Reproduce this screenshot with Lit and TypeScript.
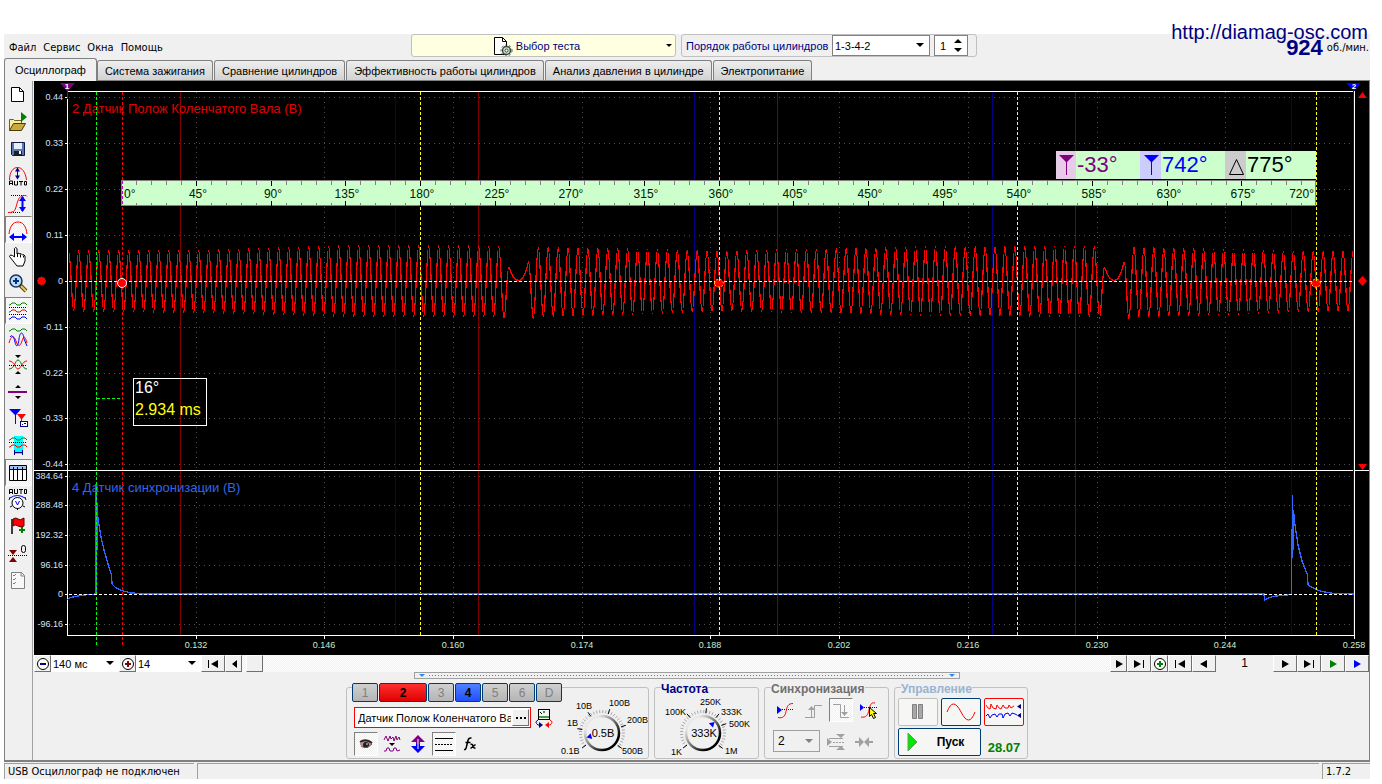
import { LitElement, html, svg, css } from "lit";
import { customElement, property, state } from "lit/decorators.js";
import { classMap } from "lit/directives/class-map.js";

/* ---------- signal data ---------- */

interface Run { from: number; to: number; teeth: number; hi: number[]; lo: number[]; }

const RUNS: Run[] = [
  { from: 68.7, to: 498.7, teeth: 43, hi: [251, 250, 245, 246], lo: [311, 313, 317, 317] },
  { from: 538.3, to: 1094.3, teeth: 56, hi: [247, 251, 247, 246], lo: [317, 311, 315, 317] },
  { from: 1134, to: 1353, teeth: 22, hi: [247, 249, 251, 251], lo: [317, 315, 312, 311] },
];

const pick = (v: number[], t: number) => {
  const p = Math.min(t * (v.length - 1), v.length - 1.001);
  const i = Math.floor(p);
  return v[i] + (v[i + 1] - v[i]) * (p - i);
};

function crankPath(): string {
  let d = "";
  let x = 0;
  let y = 0;
  const go = (nx: number, ny: number, out = 0.36, into = 0.36) => {
    const w = nx - x;
    d += ` C${(x + w * out).toFixed(1)} ${y.toFixed(1)} ${(nx - w * into).toFixed(1)} ${ny.toFixed(1)} ${nx.toFixed(1)} ${ny.toFixed(1)}`;
    x = nx;
    y = ny;
  };
  RUNS.forEach((r, n) => {
    const step = (r.to - r.from) / r.teeth;
    for (let i = 0; i <= r.teeth; i++) {
      const px = r.from + i * step;
      const py = pick(r.hi, i / r.teeth);
      if (n === 0 && i === 0) {
        d = `M${px} ${py}`;
        x = px;
        y = py;
      } else go(px, py);
      if (i < r.teeth) go(px + step / 2, pick(r.lo, i / r.teeth));
    }
    if (n < RUNS.length - 1) {
      go(r.to + 5.3, 318);
      go(r.to + 10, 267);
      go(r.to + 20, 280.5, 0.1, 0.7);
      go(r.to + 30, 262, 0.7, 0.1);
      go(r.to + 34.6, 319);
    }
  });
  return d;
}

const CRANK = crankPath();
const SYNC =
  "M67 600 L69 598 L75 596.5 L84 595 L96 594 L96 484 L97 506 L97 550 L97.5 515 L99 525 L101 537 L104 550 L108 564 L111.5 575 L112 584 L116 588 L123 591 L130 592.5 L142 594 L1264 594 L1264.5 600 L1269 597.5 L1276 596 L1291.5 594.5 L1292 545 L1292.5 495 L1293 550 L1293.5 510 L1295 525 L1298 545 L1302 561 L1307.5 575 L1308 585 L1314 588.5 L1322 591.5 L1334 593.5 L1354 594";

const Y_UPPER: [number, string][] = [
  [97, "0.44"], [143, "0.33"], [189, "0.22"], [235, "0.11"], [281, "0"],
  [327, "-0.11"], [373, "-0.22"], [418, "-0.33"], [464, "-0.44"],
];
const Y_LOWER: [number, string][] = [
  [476, "384.64"], [505, "288.48"], [535, "192.32"], [565, "96.16"], [594, "0"], [624, "-96.16"],
];
const X_AXIS: [number, string][] = [
  [196, "0.132"], [324, "0.146"], [453, "0.160"], [582, "0.174"], [710, "0.188"],
  [839, "0.202"], [968, "0.216"], [1097, "0.230"], [1225, "0.244"], [1354, "0.258"],
];

@customElement("osc-chart")
class OscChart extends LitElement {
  static styles = css`
    :host { display: block; background: #000; }
    svg { display: block; width: 100%; height: auto; font-family: "Liberation Sans", Arial, sans-serif; }
    .crisp { shape-rendering: crispEdges; fill: none; }
    .grid { stroke: #505050; stroke-dasharray: 1 4; }
    .axis { stroke: #fff; }
    .dash { stroke-dasharray: 3 2; }
    .scale { font-size: 9px; fill: #d4e4f8; }
    .time { font-size: 9px; fill: #c8ecd0; text-anchor: middle; }
    .end { text-anchor: end; }
    .mid { text-anchor: middle; }
    .title { font-size: 13px; }
    .deg { font-size: 12px; fill: #002000; }
    .big { font-size: 22px; }
    .tip { font-size: 16px; }
    .flag { font-size: 8px; font-weight: bold; fill: #fff; text-anchor: middle; }
  `;

  private vline(x: number, color: string, cls = "", y1 = 92, y2 = 635) {
    return svg`<line class="crisp ${cls}" x1=${x + 0.5} x2=${x + 0.5} y1=${y1} y2=${y2} stroke=${color}></line>`;
  }

  private ruler() {
    const ticks = [];
    for (let i = 1; i < 80; i++) {
      const x = Math.round(121.5 + i * 14.93) + 0.5;
      const major = i % 5 === 0;
      ticks.push(svg`<path class="crisp" stroke=${major ? "#000" : "#808080"} d="M${x} 181v${major ? 5 : 4}M${x} 206v${major ? -5 : -3}"></path>`);
    }
    const labels = [];
    for (let i = 1; i < 16; i++) {
      labels.push(svg`<text class="deg mid" x=${Math.round(121.5 + i * 74.65) + 2} y="198">${i * 45}°</text>`);
    }
    return svg`
      <rect x="121" y="180" width="1195" height="26" fill="#ccffcc"></rect>
      <path class="crisp" stroke="#808080" d="M121.5 206V180.5H1316M121 205.5H1315.5V180"></path>
      ${ticks}
      <text class="deg" x="124" y="198">0°</text>
      ${labels}
      <text class="deg end" x="1314" y="198">720°</text>
      <line class="crisp dash" x1="122.5" x2="122.5" y1="181" y2="206" stroke="#d000d0"></line>`;
  }

  private readout() {
    return svg`
      <rect x="1056" y="151" width="260" height="28" fill="#ccffcc"></rect>
      <rect x="1056" y="151" width="20" height="28" fill="#e6cce6"></rect>
      <rect x="1140" y="151" width="21" height="28" fill="#ccccff"></rect>
      <rect x="1225" y="151" width="21" height="28" fill="#cccccc"></rect>
      <path d="M1059 155h15l-7 7v13h-1v-13z" fill="#800080"></path>
      <path d="M1144 155h15l-7 7v13h-1v-13z" fill="#0000ff"></path>
      <path d="M1229.500 174.500h14l-7-15z" fill="none" stroke="#000"></path>
      <text class="big" x="1077" y="172" fill="#800080">-33°</text>
      <text class="big" x="1162" y="172" fill="#0000ff">742°</text>
      <text class="big" x="1247" y="172" fill="#000">775°</text>`;
  }

  render() {
    return html`<svg viewBox="34 81 1335 574" role="img" aria-label="Осциллограмма">
      ${[...Y_UPPER, ...Y_LOWER].map(([y]) => svg`<line class="crisp grid" x1="69" x2="1354" y1=${y + 0.5} y2=${y + 0.5}></line>`)}
      ${X_AXIS.slice(0, 9).map(([x]) => svg`<line class="crisp grid" x1=${x + 0.5} x2=${x + 0.5} y1="92" y2="635"></line>`)}
      ${[180, 478, 777, 1075].map((x) => this.vline(x, "#800000"))}
      ${[395, 694, 992, 1291].map((x) => this.vline(x, "#000080"))}
      <path class="crisp axis" d="M67.500 91V636M67 91.500H1354M1354.500 91V636M34 470.500H1369M67 635.500H1355"></path>
      <path class="crisp" stroke="#0000ff" d="M1353.500 88V635"></path>
      ${[...Y_UPPER, ...Y_LOWER].map(([y]) => svg`<line class="crisp axis" x1="65" x2="68" y1=${y + 0.5} y2=${y + 0.5}></line>`)}
      ${X_AXIS.map(([x]) => svg`<line class="crisp axis" x1=${x + 0.5} x2=${x + 0.5} y1="636" y2="639"></line>`)}
      <text class="title" x="72" y="113" fill="#e00000">2 Датчик Полож Коленчатого Вала (В)</text>
      <text class="title" x="72" y="492" fill="#3366e6">4 Датчик синхронизации (В)</text>
      <path class="crisp" d=${CRANK} stroke="#f00" stroke-width="1.3"></path>
      <path class="crisp" d=${SYNC} stroke="#3366ff" stroke-width="1.3"></path>
      ${this.vline(96, "#00ff00", "dash", 92, 645)}
      ${this.vline(122, "#ff0000", "dash", 92, 645)}
      ${[420, 719, 1017, 1316].map((x) => this.vline(x, "#ffff00", "dash"))}
      <path class="crisp dash" stroke="#fff" d="M69 281.500H1354M69 594.500H1354"></path>
      <path class="crisp dash" stroke="#00ff00" d="M97 398.500H122"></path>
      <path class="crisp" stroke="#3366ff" d="M130 593.500H1264"></path>

      ${Y_UPPER.map(([y, t]) => svg`<text class="scale end" x="63" y=${y + 3}>${t}</text>`)}
      ${Y_LOWER.map(([y, t]) => svg`<text class="scale end" x="63" y=${y + 3}>${t}</text>`)}
      ${X_AXIS.map(([x, t]) => svg`<text class="time" x=${x} y="648">${t}</text>`)}

      ${this.ruler()} ${this.readout()}

      <rect class="crisp" x="133.500" y="378.500" width="73" height="47" stroke="#fff"></rect>
      <text class="tip" x="135" y="393" fill="#fff">16°</text>
      <text class="tip" x="135" y="415" fill="#ffff00">2.934 ms</text>

      <path d="M60 83h15l-7 8v8h-1v-8z" fill="#800080"></path>
      <text class="flag" x="67" y="89">1</text>
      <path d="M1346 83h15l-7 8z" fill="#0000ff"></path>
      <text class="flag" x="1354" y="89">2</text>
      <path d="M1358 98h9l-4.500-6zM1358 281l4.500-5 4.500 5-4.500 5zM1358 464h9l-4.500 6z" fill="#f00"></path>
      <circle cx="41.500" cy="281" r="4" fill="#f00" stroke="#a04040" stroke-dasharray="1 2"></circle>
      <circle cx="122" cy="283" r="4.500" fill="#f00" stroke="#fff"></circle>
      ${[719, 1316].map((x) => svg`<path d="M${x - 4.5} 284a4.500 5 0 0 1 9 0l-2 3h-5z" fill="#f00" stroke="#ffe000" stroke-dasharray="2 2"></path>
        <path d="M${x + 0.5} 278v3" stroke="#ff0"></path>`)}
    </svg>`;
  }
}

/* ---------- icons ---------- */

const wave = (y: number, c: string) =>
  svg`<path d="M1 ${y + 1}h1l2 -2h3l2 2h3l2 -2h3l2 2" fill="none" stroke=${c}></path>`;

const TOOL_ICONS: { name: string; on?: boolean; art: unknown }[] = [
  { name: "Новый", art: svg`<path d="M3.500 4.500h8l4 4v10h-12z" fill="#fff" stroke="#000"></path><path d="M11.500 4.500v4h4" fill="none" stroke="#000"></path>` },
  { name: "Открыть", art: svg`<path d="M1.500 20.500v-11h4l1 1h7v3" fill="#f6eda0" stroke="#706020"></path><path d="M1.500 20.500l4-7h12l-4 7z" fill="#c9a93c" stroke="#4a3c00"></path><path d="M13 2l6 5-6 5z" fill="#008000"></path>` },
  { name: "Сохранить", art: svg`<path d="M3.500 5.500h13v13h-12l-1-1z" fill="#5a78b4" stroke="#101840"></path><path d="M6 6h8v6H6z" fill="#e8eef8"></path><path d="M6 14h8v4H6z" fill="#202020"></path><path d="M11 14h2v3h-2z" fill="#fff"></path>` },
  { name: "Авто амплитуда", art: svg`<path d="M1.500 16C1.500 8 5 3.500 9.500 3.500s8 4.500 9 12.500" fill="none" stroke="#f00"></path><path d="M9.500 4v10" stroke="#000080"></path><path d="M7 7.500l2.500-4 2.500 4zM7 11.500l2.500 4 2.500-4z" fill="#000080"></path><path d="M1.500 21v-4h3v4M1.500 19.500h3M6.500 17v4h3v-4M11 17.500h4M13 17.500v4M16.500 17.500h2v3.500h-2z" fill="none" stroke="#000"></path>` },
  { name: "Размах", art: svg`<path d="M3 4.500h16M3 21.500h9" stroke="#000" stroke-dasharray="1 1"></path><path d="M0 21.500c7 0 7-2 9-9s4-8 9-8l1 1" fill="none" stroke="#f00"></path><path d="M14.500 6v14" stroke="#00f" stroke-width="2"></path><path d="M11 10l3.500-5 3.500 5zM11 16l3.500 5 3.500-5z" fill="#00f"></path>` },
  { name: "Период", on: true, art: svg`<path d="M1 16C2 8 5 4 10 4s8 4 9 12" fill="none" stroke="#f00"></path><path d="M3 19h14" stroke="#00f" stroke-width="2"></path><path d="M6 15l-5 4 5 4zM14 15l5 4-5 4z" fill="#00f"></path>` },
  { name: "Рука", art: svg`<path d="M6.500 12V3.500q1-2 2.500 0V9l1-1 2 1 1-.5 1.500 1.500 1-.5 1.500 1.500v5l-2 5h-6L3.500 14l-2-2.500 1-1.500 2 .5z" fill="#fff" stroke="#000"></path><path d="M9.500 9v3M12.500 9.500v3M15.500 10.500v2" stroke="#000"></path>` },
  { name: "Масштаб", art: svg`<path d="M12 13l6 6" stroke="#604810" stroke-width="4"></path><path d="M13 14l5 5" stroke="#e8c860" stroke-width="2"></path><circle cx="8" cy="9" r="6" fill="#b8dcf0" stroke="#203060" stroke-width="1.500"></circle><path d="M5 9h6M8 6v6" stroke="#003080" stroke-width="2"></path>` },
  { name: "Каналы", on: true, art: svg`${wave(5, "#008000")}${wave(12, "#f00")}${wave(19, "#00f")}<path d="M1 8.500h18M1 15.500h18" stroke="#000" stroke-dasharray="1 1"></path>` },
  { name: "Наложение", art: svg`${wave(4, "#008000")}<path d="M1 17c2-8 5-8 7-2s4 6 6 0 3-5 5 2" fill="none" stroke="#f00"></path><path d="M2 11c2-3 4 0 5 5s3 6 4-3c1-8 4-8 5 0l3 7" fill="none" stroke="#00f"></path>` },
  { name: "Сведение", art: svg`<path d="M7 2h6l-3 3zM7 21h6l-3-3z" fill="#000"></path><path d="M1 16c6 0 6-9 9-9s4 9 9 9" fill="none" stroke="#008000"></path><path d="M1 8c6 0 6 8 9 8s4-8 9-8" fill="none" stroke="#f00"></path><path d="M1 12.500h18" stroke="#000" stroke-dasharray="1 1"></path>` },
  { name: "Разделитель", art: svg`<path d="M7 8h6l-3-3zM7 16h6l-3 3z" fill="#000"></path><path d="M0 12h19" stroke="#800080" stroke-width="2"></path>` },
  { name: "Курсоры", art: svg`<path d="M9 7h9l-4 5v5h-1v-5z" fill="#f00"></path><path d="M1 2h12l-5 6v9H7V8z" fill="#00f"></path><rect x="12.500" y="14.500" width="7" height="5" fill="#fff" stroke="#000080"></rect><path d="M14 17.500h1M16 16.500h2" stroke="#000080"></path>` },
  { name: "Участок", art: svg`<path d="M6 2h9v18H6z" fill="#0ff"></path>${wave(5, "#008000")}${wave(12, "#f00")}<path d="M1 8.500h18" stroke="#000" stroke-dasharray="1 1"></path><path d="M6 18.500h9M6.500 16v5M14.500 16v5" stroke="#000080"></path>` },
  { name: "Таблица", on: true, art: svg`<path d="M1.500 4.500h17v15h-17z" fill="#fff" stroke="#000"></path><path d="M2 5h16v3H2z" fill="#a0c4f0"></path><path d="M1 8.500h18M5.500 6v14M9.500 6v14M14.500 6v14" stroke="#000"></path>` },
  { name: "Авто", art: svg`<path d="M1.500 6V1.500h3V6M1.500 4.500h3M6.500 1v4.500h3V1M11 1.500h4M13 1.500V6M16.500 1.500h2v4h-2z" fill="none" stroke="#000"></path><circle cx="9.500" cy="15" r="5.500" fill="#fff" stroke="#000"></circle><path d="M2 10q7-5 15 0M1 12l1-3M18 12l-1-3" fill="none" stroke="#00f"></path><path d="M7.500 13l2 4 2-4" fill="none" stroke="#00f"></path><path d="M2 19l2-1M17 19l-2-1M9.500 22v-2" stroke="#000"></path>` },
  { name: "Метка", art: svg`<path d="M4 4v15" stroke="#000" stroke-width="1.500"></path><path d="M5 4q3-2 5 0t6-1v8q-3 2-6 0t-5 0z" fill="#f00" stroke="#600"></path><path d="M14 12v6M11 15h6" stroke="#008000" stroke-width="2"></path>` },
  { name: "Обнулить", art: svg`<path d="M1 8h8l-4 5zM1 20h8l-4-5z" fill="#800000"></path><path d="M0 13.500h19" stroke="#000" stroke-dasharray="1 1"></path><rect x="13.500" y="3.500" width="4" height="7" rx="2" fill="none" stroke="#000"></rect>` },
  { name: "Список", art: svg`<path d="M3.500 3.500h10l3 3v13h-13z" fill="#f8f8f8" stroke="#808080"></path><path d="M13 3v4h3M5 6l1 1 2-2M5 10l1 1 2-2M5 14l1 1 2-2" fill="none" stroke="#808080"></path>` },
];

const icon = (art: unknown, w = 20, h = 24) =>
  html`<svg class="ico" width=${w} height=${h} viewBox="0 0 ${w} ${h}" aria-hidden="true">${art}</svg>`;

/* ---------- rotary dial ---------- */

interface DialMark { x: number; y: number; text: string; angle: number; }

@customElement("osc-dial")
class OscDial extends LitElement {
  @property({ type: Number }) cx = 48;
  @property({ type: Number }) cy = 44;
  @property({ type: Number }) pointer = 200;
  @property() value = "";
  @property({ attribute: false }) marks: DialMark[] = [];

  static styles = css`
    :host { display: block; }
    svg { display: block; font-family: "Liberation Sans", Arial, sans-serif; }
    .mark { font-size: 9px; fill: #000; }
    .value { font-size: 11px; text-anchor: middle; }
  `;

  private tick(a: number, r1: number, r2: number, color: string) {
    const c = Math.cos((a * Math.PI) / 180);
    const s = -Math.sin((a * Math.PI) / 180);
    return svg`<line x1=${this.cx + r1 * c} y1=${this.cy + r1 * s} x2=${this.cx + r2 * c} y2=${this.cy + r2 * s} stroke=${color}></line>`;
  }

  render() {
    const minor: number[] = [];
    for (let a = -40; a <= 220; a += 8) minor.push(a);
    const p = (this.pointer * Math.PI) / 180;
    const px = this.cx + 14 * Math.cos(p);
    const py = this.cy - 14 * Math.sin(p);
    return html`<svg width="96" height="68" viewBox="0 0 96 68" role="img" aria-label=${this.value}>
      <defs>
        <linearGradient id="rim" x1="0" y1="0" x2="1" y2="1">
          <stop offset="0.2" stop-color="#e8e8e8"></stop>
          <stop offset="0.8" stop-color="#000"></stop>
        </linearGradient>
      </defs>
      ${minor.map((a) => this.tick(a, 20, 23, "#a8a8a8"))}
      ${this.marks.map((m) => this.tick(m.angle, 20, 25, "#000"))}
      <circle cx=${this.cx} cy=${this.cy} r="17" fill="#f0f0f0" stroke="url(#rim)" stroke-width="2.500"></circle>
      <path transform="translate(${px} ${py}) rotate(${-this.pointer})" d="M2 0l-5 -3v6z" fill="#00f"></path>
      <text class="value" x=${this.cx + 1} y=${this.cy + 4}>${this.value}</text>
      ${this.marks.map((m) => svg`<text class="mark" x=${m.x} y=${m.y}>${m.text}</text>`)}
    </svg>`;
  }
}

const VOLTS: DialMark[] = [
  { x: 3, y: 64, text: "0.1В", angle: 217 },
  { x: 9, y: 36, text: "1В", angle: 170 },
  { x: 18, y: 19, text: "10В", angle: 124 },
  { x: 51, y: 16, text: "100В", angle: 72 },
  { x: 69, y: 33, text: "200В", angle: 18 },
  { x: 64, y: 64, text: "500В", angle: -38 },
];
const FREQS: DialMark[] = [
  { x: 14, y: 64, text: "1K", angle: 217 },
  { x: 8, y: 24, text: "100K", angle: 130 },
  { x: 43, y: 14, text: "250K", angle: 82 },
  { x: 64, y: 24, text: "333K", angle: 50 },
  { x: 72, y: 36, text: "500K", angle: 22 },
  { x: 68, y: 63, text: "1M", angle: -38 },
];

const TABS = ["Осциллограф", "Система зажигания", "Сравнение цилиндров", "Эффективность работы цилиндров", "Анализ давления в цилиндре", "Электропитание"];
const MENU = ["Файл", "Сервис", "Окна", "Помощь"];
const CHANNELS = ["1", "2", "3", "4", "5", "6", "D"];

const left = (c = "#000") => icon(svg`<path d="M10 2v8L5 6z" fill=${c}></path>`, 14, 12);
const right = (c = "#000") => icon(svg`<path d="M4 2v8l7-4z" fill=${c}></path>`, 14, 12);
const first = () => icon(svg`<path d="M2 2h1v8H2zM12 2v8L5 6z" fill="#000"></path>`, 14, 12);
const last = () => icon(svg`<path d="M11 2h1v8h-1zM2 2v8l7-4z" fill="#000"></path>`, 14, 12);
const sign = (c: string, plus: boolean) =>
  icon(svg`<circle cx="7" cy="7" r="5.500" fill="#fff" stroke="#000"></circle><path d=${plus ? "M4 7h6M7 4v6" : "M4 7h6"} stroke=${c} stroke-width="2"></path>`, 14, 14);
const arrow = (c = "#000") => html`<svg class="arrow" width="8" height="5" viewBox="0 0 8 5" aria-hidden="true"><path d="M0 0h8L4 4z" fill=${c}></path></svg>`;

@customElement("app-root")
class AppRoot extends LitElement {
  @state() private tab = 0;

  static styles = css`
    :host {
      display: block;
      box-sizing: border-box;
      min-height: 100vh;
      padding: 34px 12px 4px 4px;
      background: #fff;
      color: #000;
      font: 11px/14px "Liberation Sans", Arial, sans-serif;
    }
    * { box-sizing: border-box; }
    button, input, select { font: inherit; color: inherit; margin: 0; padding: 0; border-radius: 0; }
    a { color: inherit; text-decoration: none; }
    button { display: flex; align-items: center; justify-content: center; border: 0; background: none; }
    .ico { display: block; flex: none; }
    .app { position: relative; background: #f0f0f0; }
    .site { position: absolute; top: -14px; right: 2px; font-size: 20px; line-height: 24px; color: #000080; }

    .top { display: grid; grid-template-columns: 407px auto 1fr; height: 24px; }
    .menu { display: flex; gap: 7px; padding: 7px 0 0 5px; font: 11px/14px "DejaVu Sans Condensed", Tahoma, sans-serif; }
    .tools { display: flex; gap: 5px; padding-top: 0; height: 23px; }
    .test { width: 265px; border: 1px solid #c0c0c0; border-radius: 3px; background: #ffffe1; color: #000080; display: grid; grid-template-columns: 1fr 14px; align-items: center; }
    .test-name { display: flex; align-items: center; justify-content: center; gap: 3px; }
    .test .caret { justify-self: end; margin-right: 3px; }
    .order { display: flex; align-items: center; gap: 4px; width: 296px; padding-left: 4px; border: 1px solid #c0c0c0; border-radius: 3px; }
    .order label { color: #000080; white-space: nowrap; width: 142px; }
    .pick { display: grid; align-items: center; background: #fff; }
    .pick select { grid-area: 1 / 1; appearance: none; width: 100%; height: 100%; border: 0; background: none; padding-left: 2px; outline: 0; }
    .pick .arrow { grid-area: 1 / 1; justify-self: end; margin-right: 5px; pointer-events: none; }
    .boxed { border: 1px solid #808080; height: 21px; width: 98px; }
    .spin { display: flex; align-items: center; width: 34px; height: 21px; border: 1px solid #808080; background: #fff; }
    .spin input { width: 18px; border: 0; padding-left: 5px; background: none; }
    .rpm { display: flex; justify-content: flex-end; align-items: center; gap: 4px; padding: 3px 1px 0 0; font: 11px/20px "DejaVu Sans Condensed", Tahoma, sans-serif; }
    .rpm b { font: bold 22px/22px "Liberation Sans", Arial, sans-serif; color: #000080; }

    .tabs { display: flex; align-items: flex-end; gap: 1px; height: 22px; padding-left: 1px; }
    .tab { height: 20px; padding: 0 7px; border: 1px solid #808080; border-bottom: 0; border-radius: 3px 3px 0 0; background: linear-gradient(#eee, #d2d2d2); white-space: nowrap; }
    .tab.on { height: 23px; padding: 0 10px; margin: 0 -1px -1px -1px; background: #f0f0f0; z-index: 1; }

    .frame { border: 1px solid #808080; border-bottom-width: 2px; }
    .work { display: grid; grid-template-columns: 29px minmax(0, 1fr); }
    .side { display: flex; flex-direction: column; border-right: 1px solid #a0a0a0; margin-right: 1px; }
    .tool { height: 27px; width: 27px; border: 1px solid transparent; padding-right: 1px; }
    .tool.on, .mini.on { border: 1px solid #fff; border-top-color: #808080; border-left-color: #808080; background: repeating-conic-gradient(#fff 0 25%, #f0f0f0 0 50%) 0 0 / 2px 2px; }

    .scroll { display: flex; height: 17px; background: #fff; }
    .key { height: 17px; background: #f0f0f0; border: 1px solid #fff; border-right-color: #707070; border-bottom-color: #707070; }
    .w17 { width: 17px; } .w24 { width: 24px; }
    .range { width: 68px; }
    .steps { width: 65px; }
    .track { flex: 1; padding-left: 4px; background: repeating-conic-gradient(#fff 0 25%, #f0f0f0 0 50%) 0 0 / 2px 2px; }
    .page { width: 57px; background: #f0f0f0; text-align: center; line-height: 17px; font-size: 12px; }

    .lower { height: 88px; margin-left: -29px; display: flex; flex-direction: column; align-items: center; }
    .split { display: flex; align-items: center; gap: 4px; width: 546px; height: 7px; border: 1px solid #a0a0a0; padding: 0 4px; }
    .dots { flex: 1; height: 1px; background: repeating-linear-gradient(90deg, #2a8cf0 0 1px, transparent 1px 3px); }
    .panels { display: flex; gap: 5px; padding-top: 8px; }
    .group { height: 72px; border: 1px solid #c0c0c0; border-radius: 3px; margin: 0; padding: 0; min-width: 0; position: relative; }
    .cap { position: absolute; top: -6px; left: 6px; background: #f0f0f0; font-size: 12px; line-height: 14px; font-weight: bold; }
    .chan { width: 303px; display: grid; grid-template-columns: 210px 1fr; padding-left: 5px; }
    .chan-left { display: grid; grid-template-rows: 19px 21px 24px; row-gap: 5px; margin-top: -5px; }
    .chans { display: flex; gap: 1px; background: #f0f0f0; }
    .ch { width: 26px; height: 19px; border: 1px solid #003c74; border-radius: 2px; background: linear-gradient(#d0d0d0, #b4b4b4); color: #808080; font-size: 12px; }
    .ch.red { width: 48px; background: linear-gradient(#ff3030, #e00000); color: #000; font-weight: bold; }
    .ch.blue { background: linear-gradient(#5080ff, #2050ff); color: #000; font-weight: bold; }
    .name { display: flex; align-items: center; gap: 4px; padding-left: 2px; }
    .field { display: flex; width: 177px; height: 21px; border: 1px solid #f00; background: #fff; }
    .field input { flex: 1; min-width: 0; border: 0; padding-left: 3px; background: none; outline: 0; }
    .more { width: 17px; height: 17px; margin: 1px; background: #f0f0f0; border: 1px solid #fff; border-right-color: #707070; border-bottom-color: #707070; }
    .minis { display: flex; gap: 2px; padding-left: 2px; margin-top: -1px; }
    .mini { width: 24px; height: 24px; border: 1px solid transparent; }
    .freq { width: 105px; } .freq .cap { color: #000080; }
    .dial1 { margin: 2px 0 0 -4px; }
    .dial2 { margin: 3px 0 0 2px; }
    .sync { width: 125px; padding: 10px 5px 0 8px; display: grid; grid-template-rows: 24px 22px; row-gap: 8px; } .sync .cap { color: #707070; }
    .row { display: flex; gap: 4px; }
    .edge { width: 47px; height: 22px; border: 1px solid #a0a0a0; background: #f0f0f0; font-size: 12px; }
    .edge .arrow { margin-right: 6px; }
    .edge select { padding-left: 4px; }
    .run { width: 134px; padding: 10px 3px 0 3px; display: grid; grid-template-columns: 40px 40px 40px; grid-template-rows: 28px 28px; gap: 2px 3px; } .run .cap { color: #99b4d1; }
    .btn { border: 1px solid #003c74; border-radius: 2px; background: #f6f6f4; }
    .btn.off { border-color: #c0c0c0; }
    .btn.sel { border-color: #f00; }
    .start { grid-column: span 2; font-weight: bold; font-size: 12px; gap: 18px; padding-right: 8px; }
    .temp { align-self: end; justify-self: center; font-weight: bold; font-size: 13px; color: #008000; padding-bottom: 1px; }

    .status { display: grid; grid-template-columns: 190px 1fr 48px; gap: 3px; padding-top: 1px; font: 11px/15px "DejaVu Sans Condensed", Tahoma, sans-serif; }
    .cell { height: 16px; padding-left: 3px; border-top: 1px solid #a0a0a0; border-left: 1px solid #a0a0a0; white-space: nowrap; }
  `;

  private topBar() {
    return html`<div class="top">
      <nav class="menu">${MENU.map((m) => html`<a href="#">${m}</a>`)}</nav>
      <div class="tools">
        <button class="test">
          <span class="test-name">${icon(svg`<path d="M1.500 1.500h8l4 4v13h-12z" fill="#fff" stroke="#000"></path><path d="M9.500 1.500v4h4" fill="none" stroke="#000"></path><circle cx="13.500" cy="14.500" r="4" fill="#c8e0c8" stroke="#404840" stroke-width="1.500"></circle><circle cx="13.500" cy="14.500" r="5.500" fill="none" stroke="#404840" stroke-dasharray="2 2"></circle><circle cx="13.500" cy="14.500" r="1.500" fill="#fff" stroke="#404840"></circle>`, 20, 20)}Выбор теста</span>
          <svg class="caret" width="6" height="3" viewBox="0 0 6 3" aria-hidden="true"><path d="M0 0h6L3 3z"></path></svg>
        </button>
        <div class="order">
          <label for="order">Порядок работы цилиндров</label>
          <div class="pick boxed"><select id="order"><option>1-3-4-2</option></select>${arrow()}</div>
          <div class="spin"><input aria-label="Цилиндр" value="1" />${icon(svg`<path d="M1 6h8L5 2zM1 11h8l-4 4z"></path>`, 10, 17)}</div>
        </div>
      </div>
      <div class="rpm"><b>924</b><span>об./мин.</span></div>
    </div>`;
  }

  private scrollRow() {
    return html`<div class="scroll">
      <button class="key w17" aria-label="Меньше">${sign("#000080", false)}</button>
      <div class="pick range"><select aria-label="Развёртка"><option>140 мс</option></select>${arrow()}</div>
      <button class="key w17" aria-label="Больше">${sign("#800000", true)}</button>
      <div class="pick steps"><select aria-label="Деления"><option>14</option></select>${arrow()}</div>
      <button class="key w24" aria-label="В начало">${first()}</button>
      <button class="key w17" aria-label="Назад">${left()}</button>
      <div class="track"><button class="key w17" aria-label="Ползунок"></button></div>
      <button class="key w17" aria-label="Вперёд">${right()}</button>
      <button class="key w24" aria-label="В конец">${last()}</button>
      <button class="key w17" aria-label="Добавить">${sign("#008000", true)}</button>
      <button class="key w24" aria-label="Первый кадр">${first()}</button>
      <button class="key w24" aria-label="Предыдущий кадр">${icon(svg`<path d="M10 2v8L3 6z"></path>`, 14, 12)}</button>
      <div class="page">1</div>
      <button class="key w24" aria-label="Следующий кадр">${right()}</button>
      <button class="key w24" aria-label="Последний кадр">${last()}</button>
      <button class="key w24" aria-label="Воспроизвести">${right("#008000")}</button>
      <button class="key w24" aria-label="Воспроизвести всё">${right("#0000ff")}</button>
    </div>`;
  }

  private channelGroup() {
    return html`<section class="group chan">
      <div class="chan-left">
        <div class="chans">${CHANNELS.map((c) => html`<button class=${classMap({ ch: true, red: c === "2", blue: c === "4" })}>${c}</button>`)}</div>
        <div class="name">
          <div class="field"><input aria-label="Название канала" value="Датчик Полож Коленчатого Вала" /><button class="more" aria-label="Выбрать датчик">${icon(svg`<path d="M1 3h2v2H1zM5 3h2v2H5zM9 3h2v2H9z" fill="#000"></path>`, 12, 8)}</button></div>
          ${icon(svg`<rect x="3.500" y="1.500" width="11" height="10" fill="#f4f4f4" stroke="#000"></rect><path d="M5 4l2 2M9 3v2" stroke="#000"></path><path d="M4 8h10v2H4z" fill="#40a040"></path><path d="M3 12q-4 2 0 5h2" fill="none" stroke="#000080"></path><path d="M4 14l4 3-4 3z" fill="#000080"></path><path d="M15 12q4 2 0 5h-1" fill="none" stroke="#f00"></path><path d="M14 14l-4 3 4 3z" fill="#f00"></path>`, 20, 20)}
        </div>
        <div class="minis">
          <button class="mini on" aria-label="Показать">${icon(svg`<path d="M3 9q6-5 12 0v1q-6 6-12 1z" fill="#b09890"></path><path d="M3 8q6-4 12 1" fill="none" stroke="#302020" stroke-width="2"></path><circle cx="9" cy="11" r="3" fill="#202020"></circle><circle cx="10" cy="10" r="1" fill="#9ac"></circle><path d="M4 12q5 4 11-2" fill="none" stroke="#705050"></path>`, 18, 20)}</button>
          <button class="mini" aria-label="Фильтр">${icon(svg`<path d="M1 6l2-4 2 5 2-5 1 3 2-2 1 4 2-5 1 4 2-3 1 3" fill="none" stroke="#800080"></path><path d="M6 9h6l-3 3z"></path><path d="M1 17h2l1-3h2l1 3 3 0 1-3h2l1 3 3-1" fill="none" stroke="#800080"></path>`, 18, 20)}</button>
          <button class="mini" aria-label="Смещение">${icon(svg`<path d="M9 1l7 7h-5v2H7V8H2z" fill="#800080"></path><path d="M9 19l7-7h-5v-2H7v2H2z" fill="#00f"></path><path d="M9 5v10" stroke="#fff"></path>`, 18, 20)}</button>
          <button class="mini on" aria-label="Линии">${icon(svg`<path d="M0 4.500h18M0 16.500h18" stroke="#000"></path><path d="M0 10.500h18" stroke="#000" stroke-dasharray="2 1"></path>`, 18, 20)}</button>
          <button class="mini" aria-label="Формула">${icon(svg`<path d="M3 15.500q2 .5 2.500-3l1.500-6q.5-3 3.500-2.500M4.500 8.500h5" fill="none" stroke="#000" stroke-width="1.500"></path><path d="M9.500 10.500q2-1 2.500 1.500t2.500 2M14.500 10.500l-5 4" fill="none" stroke="#000" stroke-width="1.500"></path>`, 18, 20)}</button>
        </div>
      </div>
      <osc-dial class="dial1" .cx=${44} .cy=${43} .pointer=${196} value="0.5В" .marks=${VOLTS}></osc-dial>
    </section>`;
  }

  private syncGroup() {
    return html`<section class="group sync">
      <span class="cap">Синхронизация</span>
      <div class="row">
        <button class="mini" aria-label="Уровень">${icon(svg`<path d="M1 6v8l5-4z" fill="#00f"></path><path d="M6 9.500h11" stroke="#00f" stroke-dasharray="1 1"></path><path d="M2 17.500c5 1 7-1 8-6s2-8 7-8" fill="none" stroke="#f00"></path>`, 18, 20)}</button>
        <button class="mini" aria-label="Фронт">${icon(svg`<path d="M1 17.500h9.500v-12H18M7.500 17V8" fill="none" stroke="#a0a0a0"></path><path d="M4 10l3.500-4L11 10z" fill="#a0a0a0"></path>`, 18, 20)}</button>
        <button class="mini on" aria-label="Спад">${icon(svg`<path d="M1 4.500h7.500v13H17M12.500 5v9" fill="none" stroke="#a0a0a0"></path><path d="M9 12l3.500 4 3.500-4z" fill="#a0a0a0"></path>`, 18, 20)}</button>
        <button class="mini" aria-label="Выбор уровня">${icon(svg`<path d="M0 4v7l4-3.500z" fill="#00f"></path><path d="M4 7.500h14" stroke="#00f" stroke-dasharray="1 1"></path><path d="M1 17c5 1 7-2 8-7s2-8 6-7" fill="none" stroke="#f00"></path><path d="M9.500 7.500v9l2-2 2 4 2-1-2-4h3z" fill="#ff0" stroke="#000"></path>`, 18, 20)}</button>
      </div>
      <div class="row">
        <div class="pick edge"><select aria-label="Канал синхронизации"><option>2</option></select>${arrow("#808080")}</div>
        <button class="mini" aria-label="Центрировать">${icon(svg`<path d="M0 5v8l5-4zM9 1h9l-4 4zM9 17h9l-4-4z" fill="#a0a0a0"></path><path d="M2 5.500h14M2 13.500h14" stroke="#a0a0a0"></path><path d="M6 9.500h12" stroke="#a0a0a0" stroke-dasharray="2 1"></path>`, 18, 18)}</button>
        <button class="mini" aria-label="Сжать">${icon(svg`<path d="M0 8h4V4l5 5-5 5v-4H0zM18 8h-4V4L9 9l5 5v-4h4z" fill="#a0a0a0"></path>`, 18, 18)}</button>
      </div>
    </section>`;
  }

  private runGroup() {
    return html`<section class="group run">
      <span class="cap">Управление</span>
      <button class="btn off" aria-label="Пауза">${icon(svg`<path d="M4.500 2.500h4v14h-4zM10.500 2.500h4v14h-4z" fill="#a8a8a8" stroke="#808080"></path>`, 20, 20)}</button>
      <button class="btn" aria-label="Непрерывно">${icon(svg`<path d="M2 10Q8-6 16 10t14 0" fill="none" stroke="#f00"></path>`, 32, 20)}</button>
      <button class="btn sel" aria-label="Потоки">${icon(svg`<path d="M0 3l2 3 2 1 1-5 2 4 3 1 1-4 2 3 2 1 2-4 2 3 3 0 1-3 2 3 3-2" fill="none" stroke="#f00"></path><path d="M0 14l2-2 2 4 2-3 3-1 2 3 2-3 3 0 1 4 2-4 3-1 2 3 2-3 3 1 2 1" fill="none" stroke="#00f"></path><path d="M35 2v5l-4-2.500zM35 11v5l-4-2.500z" fill="#000080"></path>`, 36, 20)}</button>
      <button class="btn start">${icon(svg`<path d="M1 1v18l9-9z" fill="#00e800" stroke="#60a060"></path>`, 12, 20)}Пуск</button>
      <output class="temp">28.07</output>
    </section>`;
  }

  render() {
    return html`<main class="app">
      <a class="site" href="http://diamag-osc.com">http://diamag-osc.com</a>
      ${this.topBar()}
      <div class="tabs" role="tablist">
        ${TABS.map((t, i) => html`<button role="tab" class=${classMap({ tab: true, on: i === this.tab })} @click=${() => (this.tab = i)}>${t}</button>`)}
      </div>
      <div class="frame">
        <div class="work">
          <aside class="side">${TOOL_ICONS.map((t) => html`<button class=${classMap({ tool: true, on: !!t.on })} aria-label=${t.name}>${icon(t.art)}</button>`)}</aside>
          <div class="view">
            <osc-chart></osc-chart>
            ${this.scrollRow()}
            <div class="lower">
              <div class="split">${icon(svg`<path d="M0 1h6L3 4z" fill="#2a8cf0"></path>`, 6, 5)}<span class="dots"></span>${icon(svg`<path d="M0 1h6L3 4z" fill="#2a8cf0"></path>`, 6, 5)}</div>
              <div class="panels">
                ${this.channelGroup()}
                <section class="group freq"><span class="cap">Частота</span><osc-dial class="dial2" .cx=${46} .cy=${42} .pointer=${44} value="333K" .marks=${FREQS}></osc-dial></section>
                ${this.syncGroup()} ${this.runGroup()}
              </div>
            </div>
          </div>
        </div>
      </div>
      <footer class="status"><div class="cell">USB Осциллограф не подключен</div><div class="cell"></div><div class="cell">1.7.2</div></footer>
    </main>`;
  }
}
